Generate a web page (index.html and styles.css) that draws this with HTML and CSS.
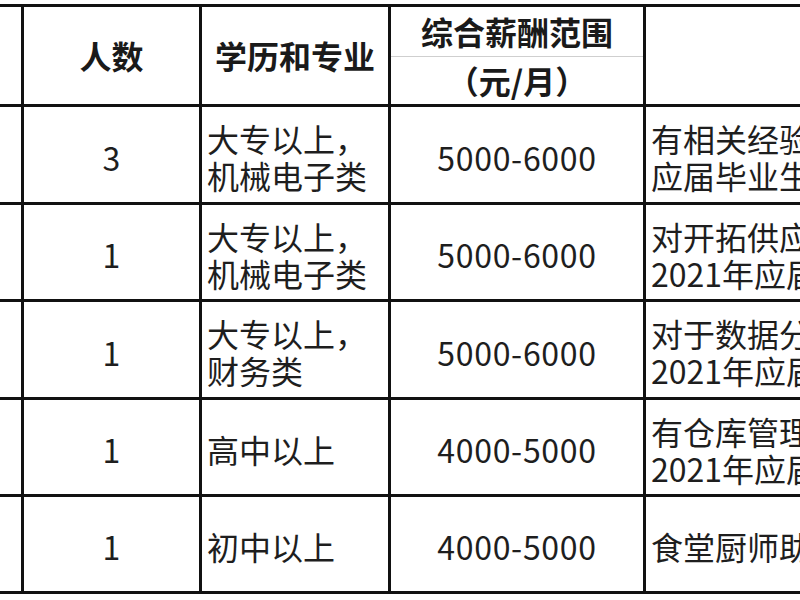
FILE: index.html
```html
<!DOCTYPE html>
<html lang="zh-CN">
<head>
<meta charset="utf-8">
<title>招聘岗位</title>
<link rel="stylesheet" href="styles.css">
</head>
<body>
<div class="sheet">
<table class="jobs">
  <colgroup>
    <col class="c-pos">
    <col class="c-num">
    <col class="c-edu">
    <col class="c-pay">
    <col class="c-req">
  </colgroup>
  <thead>
    <tr class="h-top">
      <th rowspan="2"></th>
      <th rowspan="2">人数</th>
      <th rowspan="2">学历和专业</th>
      <th class="pay-a">综合薪酬范围</th>
      <th rowspan="2" class="req"></th>
    </tr>
    <tr class="h-bot">
      <th class="pay-b">（元/月）</th>
    </tr>
  </thead>
  <tbody>
    <tr class="r1">
      <td></td>
      <td class="num">3</td>
      <td class="edu">大专以上，<br>机械电子类</td>
      <td class="pay">5000-6000</td>
      <td class="req">有相关经验者优先<br>应届毕业生亦可</td>
    </tr>
    <tr class="r2">
      <td></td>
      <td class="num">1</td>
      <td class="edu">大专以上，<br>机械电子类</td>
      <td class="pay">5000-6000</td>
      <td class="req">对开拓供应商有经验<br>2021年应届毕业生</td>
    </tr>
    <tr class="r3">
      <td></td>
      <td class="num">1</td>
      <td class="edu">大专以上，<br>财务类</td>
      <td class="pay">5000-6000</td>
      <td class="req">对于数据分析敏感<br>2021年应届毕业生</td>
    </tr>
    <tr class="r4">
      <td></td>
      <td class="num">1</td>
      <td class="edu">高中以上</td>
      <td class="pay">4000-5000</td>
      <td class="req">有仓库管理经验<br>2021年应届毕业生</td>
    </tr>
    <tr class="r5">
      <td></td>
      <td class="num">1</td>
      <td class="edu">初中以上</td>
      <td class="pay">4000-5000</td>
      <td class="req">食堂厨师助理</td>
    </tr>
  </tbody>
</table>
</div>
</body>
</html>
```
FILE: styles.css
```css
html, body {
  margin: 0;
  padding: 0;
  background: #ffffff;
  overflow: hidden;
}

.sheet {
  width: 800px;
  height: 600px;
  overflow: hidden;
  padding-top: 4px;
  box-sizing: border-box;
}

.jobs {
  border-collapse: collapse;
  table-layout: fixed;
  width: 1022px;
  margin-left: -79px;
  font-family: "Microsoft YaHei", "Noto Sans CJK SC", "Noto Sans", sans-serif;
  font-size: 32px;
  line-height: 37px;
  color: #1e1e1e;
}

.c-pos { width: 100px; }
.c-num { width: 178px; }
.c-edu { width: 189px; }
.c-pay { width: 255px; }
.c-req { width: 300px; }

.jobs th,
.jobs td {
  border: 3px solid #111111;
  padding: 0 5px;
  white-space: nowrap;
  overflow: hidden;
  vertical-align: middle;
}

.jobs th {
  font-weight: 700;
  color: #1a1a1a;
  text-align: center;
}

.h-top { height: 51px; }
.h-bot { height: 49px; }

.jobs th.pay-a {
  border-bottom: 1px solid #cfcfcf;
  padding-top: 0;
}

.jobs th.pay-b {
  border-top: 1px solid #cfcfcf;
  padding-bottom: 0;
}

.r1 { height: 98px; }
.r2 { height: 97px; }
.r3 { height: 98px; }
.r4 { height: 97px; }
.r5 { height: 97px; }

.jobs td {
  padding-top: 5px;
}

.num,
.pay {
  text-align: center;
}

.pay {
  letter-spacing: 0.7px;
}

.edu,
.req {
  text-align: left;
}
```
